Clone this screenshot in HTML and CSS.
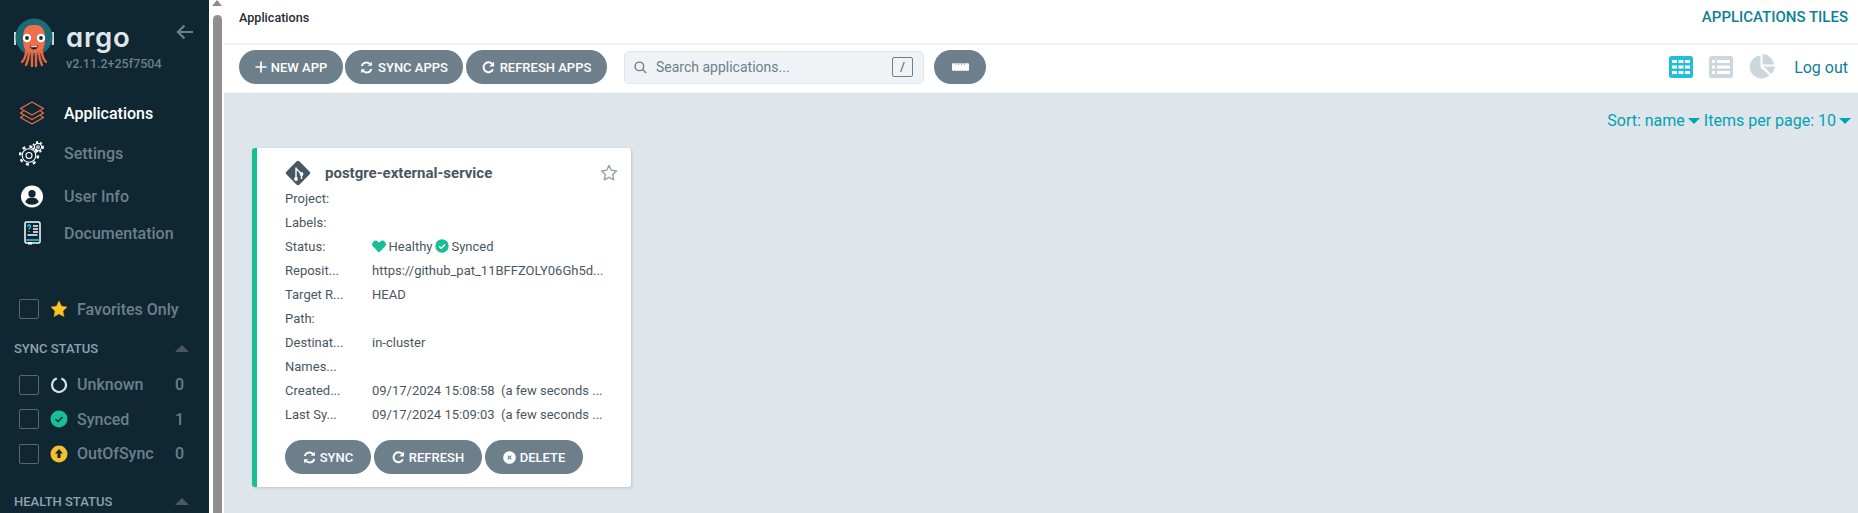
FILE: index.html
```html
<!DOCTYPE html>
<html lang="en">
<head>
<meta charset="utf-8">
<title>Applications Tiles - Argo CD</title>
<link rel="stylesheet" href="styles.css">
</head>
<body>
<aside class="sidebar">
  <div class="brand">
    <svg class="logo" viewBox="0 0 40 50" width="40" height="50">
      <rect x="0" y="14" width="2" height="13" fill="#c9d6dc"/>
      <rect x="38" y="14" width="2" height="13" fill="#c9d6dc"/>
      <circle cx="20" cy="19" r="18.5" fill="#1d6a75"/>
      <path d="M9 22C9 9 13 7 20 7s11 2 11 15c0 6-2 10-4 13H13c-2-3-4-7-4-13z" fill="#ee6f4d"/>
      <path d="M12 33c0 5-2 9-4 11M15 34c0 6-2 11-3 13M18 34v14M22 34v14M25 34c0 6 2 11 3 13M28 33c0 5 2 9 4 11" stroke="#e8663f" stroke-width="2.4" fill="none" stroke-linecap="round"/>
      <circle cx="13" cy="20" r="4.2" fill="#fff"/><circle cx="27" cy="20" r="4.2" fill="#fff"/>
      <circle cx="13" cy="20" r="1.9" fill="#1b2a33"/><circle cx="27" cy="20" r="1.9" fill="#1b2a33"/>
      <path d="M16 27.500c2 1 6 1 8 0-.5 3-2 4-4 4s-3.500-1-4-4z" fill="#2a1712"/>
      <path d="M17 28.200h6v1h-6z" fill="#fff"/>
    </svg>
    <div class="brand-text">
      <div class="wordmark">argo</div>
      <div class="version">v2.11.2+25f7504</div>
    </div>
    <svg class="collapse" viewBox="0 0 18 16" width="18" height="16"><path d="M17 8H2M8.500 1.500 2 8l6.500 6.500" fill="none" stroke="#6d7f8b" stroke-width="2.200"/></svg>
  </div>

  <nav class="nav">
    <a class="nav-item nav-apps active">
      <svg viewBox="0 0 26 26" width="26" height="26" fill="none" stroke="#e96d4c" stroke-width="1.300" stroke-linejoin="round"><path d="M13 2 24.500 8.500 13 15 1.500 8.500z"/><path d="M4.500 11 1.500 13 13 19.500 24.500 13l-3-2"/><path d="M4.500 15.500 1.500 17.500 13 24 24.500 17.500l-3-2"/></svg>
      <span>Applications</span>
    </a>
    <a class="nav-item nav-settings">
      <svg viewBox="0 0 26 26" width="26" height="26" fill="none" stroke="#fff" stroke-width="1.100"><circle cx="10" cy="15.500" r="6.800"/><circle cx="10" cy="15.500" r="9" stroke-dasharray="3 4.070" stroke-width="2.400"/><circle cx="10" cy="15.500" r="3"/><circle cx="19" cy="7" r="3.600"/><circle cx="19" cy="7" r="5" stroke-dasharray="2 2.190" stroke-width="1.800"/><circle cx="19" cy="7" r="1.300"/></svg>
      <span>Settings</span>
    </a>
    <a class="nav-item nav-user">
      <svg viewBox="0 0 24 24" width="23" height="23"><circle cx="12" cy="12" r="11.500" fill="#fff"/><circle cx="12" cy="9" r="3.800" fill="#0f2733"/><path d="M5 18c.5-3.500 3-5 7-5s6.500 1.500 7 5c-2 1.800-4.500 2.600-7 2.600S7 19.800 5 18z" fill="#0f2733"/></svg>
      <span>User Info</span>
    </a>
    <a class="nav-item nav-docs">
      <svg viewBox="0 0 24 24" width="24" height="24" fill="none"><rect x="5" y="1" width="15" height="21" rx="1.500" stroke="#fff" stroke-width="1.500"/><path d="M5 19h15" stroke="#29d3e6" stroke-width="1.500"/><path d="M8 21h4v2.500H8z" fill="#fff"/><path d="M13 5h5M13 8h5M13 11h5M7.500 14h10" stroke="#fff" stroke-width="1.300"/><path d="M7.500 5.500c0-2 3-2 3 0 0 1.300-1.500 1.200-1.500 3M9 10v1" stroke="#29d3e6" stroke-width="1.300"/></svg>
      <span>Documentation</span>
    </a>
  </nav>

  <div class="filter-row favorites">
    <span class="check"></span>
    <svg viewBox="0 0 18 18" width="18" height="18"><path d="M9 .8l2.500 5.300 5.700.8-4.100 4 1 5.800L9 14.100l-5.100 2.600 1-5.800-4.100-4 5.700-.8z" fill="#fdc627" stroke="#e0861a" stroke-width=".4"/></svg>
    <span class="filter-label">Favorites Only</span>
  </div>

  <div class="filter-head sync-head"><span>SYNC STATUS</span><i class="caret-up"></i></div>
  <div class="filter-row">
    <span class="check"></span>
    <svg viewBox="0 0 18 18" width="18" height="18" fill="none"><circle cx="9" cy="9" r="7" stroke="#d6e1e8" stroke-width="2.200" stroke-dasharray="39 5" transform="rotate(-70 9 9)"/></svg>
    <span class="filter-label">Unknown</span><span class="count">0</span>
  </div>
  <div class="filter-row">
    <span class="check"></span>
    <svg viewBox="0 0 18 18" width="18" height="18"><circle cx="9" cy="9" r="8.500" fill="#18be94"/><path d="M5.500 9.200 8 11.500l4.500-4.500" stroke="#0f2733" stroke-width="1.500" fill="none"/></svg>
    <span class="filter-label">Synced</span><span class="count">1</span>
  </div>
  <div class="filter-row">
    <span class="check"></span>
    <svg viewBox="0 0 18 18" width="18" height="18"><circle cx="9" cy="9" r="8.500" fill="#f4c030"/><path d="M9 4 13 8.500H10.500V13h-3V8.500H5z" fill="#0f2733"/></svg>
    <span class="filter-label">OutOfSync</span><span class="count">0</span>
  </div>
  <div class="filter-head health-head"><span>HEALTH STATUS</span><i class="caret-up"></i></div>
</aside>

<div class="scrollbar"><i class="scroll-arrow"></i><i class="scroll-thumb"></i></div>

<main class="main">
  <header class="topbar">
    <span class="crumb">Applications</span>
    <span class="page-title">APPLICATIONS TILES</span>
  </header>

  <div class="toolbar">
    <button class="btn btn-new"><svg viewBox="0 0 12 12" width="12" height="12"><path d="M6 .5v11M.5 6h11" stroke="#fff" stroke-width="1.700"/></svg>NEW APP</button>
    <button class="btn btn-sync"><svg viewBox="0 0 14 14" width="13" height="13" fill="none"><path d="M1.800 5.500A5.300 5.300 0 0 1 11 3.500" stroke="#fff" stroke-width="2.100"/><path d="M12.800 .8v4.400H8.400z" fill="#fff"/><path d="M12.200 8.500A5.300 5.300 0 0 1 3 10.500" stroke="#fff" stroke-width="2.100"/><path d="M1.200 13.200V8.800h4.400z" fill="#fff"/></svg>SYNC APPS</button>
    <button class="btn btn-refresh"><svg viewBox="0 0 14 14" width="13" height="13" fill="none"><path d="M11.800 9A5.300 5.300 0 1 1 10.800 3" stroke="#fff" stroke-width="2.100"/><path d="M13 .6v5.200H7.800z" fill="#fff"/></svg>REFRESH APPS</button>
    <label class="search">
      <svg viewBox="0 0 14 14" width="13" height="13" fill="none" stroke="#6d7f8b" stroke-width="1.500"><circle cx="5.800" cy="5.800" r="4.600"/><path d="M9.200 9.200 13 13"/></svg>
      <span class="search-text">Search applications...</span>
      <kbd class="key">/</kbd>
    </label>
    <button class="btn btn-ruler"><svg viewBox="0 0 18 8" width="17" height="8"><path d="M1 0h16a1 1 0 0 1 1 1v6a1 1 0 0 1-1 1H1a1 1 0 0 1-1-1V1a1 1 0 0 1 1-1z" fill="#fff"/><path d="M4 0v2M7 0v2M10 0v2M13 0v2" stroke="#6d7f8b" stroke-width=".7"/></svg></button>
    <div class="view-switch">
      <svg class="view" viewBox="0 0 24 22" width="24" height="22"><rect width="24" height="22" rx="2.500" fill="#22c0d8"/><path d="M3 4h5v3H3zM9.500 4h5v3h-5zM16 4h5v3h-5zM3 9.500h5v3H3zM9.500 9.500h5v3h-5zM16 9.500h5v3h-5zM3 15h5v3H3zM9.500 15h5v3h-5zM16 15h5v3h-5z" fill="#fff"/></svg>
      <svg class="view" viewBox="0 0 24 22" width="24" height="22"><rect width="24" height="22" rx="2.500" fill="#ccd6dd"/><path d="M3 4h3v3H3zM8 4h13v3H8zM3 9.500h3v3H3zM8 9.500h13v3H8zM3 15h3v3H3zM8 15h13v3H8z" fill="#fff"/></svg>
      <svg class="view view-pie" viewBox="0 0 26 26" width="26" height="26"><path d="M11.500 1.500A11.500 11.500 0 1 0 20.500 21L11.500 13.500z" fill="#ccd6dd"/><path d="M13.500 0A12 12 0 0 1 25 10.500H13.500z" fill="#ccd6dd"/><path d="M14.500 12.500H26A12 12 0 0 1 22.300 20z" fill="#ccd6dd"/></svg>
      <a class="logout">Log out</a>
    </div>
  </div>

  <section class="content">
    <div class="sorter">
      <span>Sort: name</span><i class="caret-down"></i>
      <span>Items per page: 10</span><i class="caret-down"></i>
    </div>

    <article class="card">
      <div class="card-title">
        <svg class="git" viewBox="0 0 26 26" width="26" height="26"><rect x="3.800" y="3.800" width="18.400" height="18.400" rx="2.200" transform="rotate(45 13 13)" fill="#495763"/><path d="M11 7.500v11M11 8.500l5.500 5.500v5" stroke="#fff" stroke-width="1.400" fill="none"/><circle cx="11" cy="19" r="1.900" fill="#fff"/><circle cx="16.500" cy="14" r="1.900" fill="#fff"/></svg>
        <span class="app-name">postgre-external-service</span>
        <svg class="star" viewBox="0 0 18 18" width="18" height="18"><path d="M9 1.500l2.300 4.800 5.200.7-3.800 3.600 1 5.200L9 13.300l-4.700 2.500 1-5.200L1.500 7l5.200-.7z" fill="none" stroke="#8fa4b1" stroke-width="1.400" stroke-linejoin="round"/></svg>
      </div>
      <div class="fields">
        <div class="field"><span class="key-name">Project:</span><span></span></div>
        <div class="field"><span class="key-name">Labels:</span><span></span></div>
        <div class="field"><span class="key-name">Status:</span>
          <span class="status">
            <svg viewBox="0 0 14 13" width="14" height="13"><path d="M7 12.500 1.200 6.700A3.500 3.500 0 0 1 1 2 3.500 3.500 0 0 1 5.800 1.500L7 2.700l1.200-1.200A3.500 3.500 0 0 1 13 2a3.500 3.500 0 0 1-.2 4.700z" fill="#18be94"/></svg>
            <span>Healthy</span>
            <svg viewBox="0 0 14 14" width="14" height="14"><circle cx="7" cy="7" r="6.700" fill="#18be94"/><path d="M4 7.200l2.200 2 3.800-3.800" stroke="#fff" stroke-width="1.400" fill="none"/></svg>
            <span>Synced</span>
          </span>
        </div>
        <div class="field"><span class="key-name">Reposit...</span><span class="value">https://github_pat_11BFFZOLY06Gh5d...</span></div>
        <div class="field"><span class="key-name">Target R...</span><span class="value">HEAD</span></div>
        <div class="field"><span class="key-name">Path:</span><span></span></div>
        <div class="field"><span class="key-name">Destinat...</span><span class="value">in-cluster</span></div>
        <div class="field"><span class="key-name">Names...</span><span></span></div>
        <div class="field"><span class="key-name">Created...</span><span class="value">09/17/2024 15:08:58&nbsp; (a few seconds ...</span></div>
        <div class="field"><span class="key-name">Last Sy...</span><span class="value">09/17/2024 15:09:03&nbsp; (a few seconds ...</span></div>
      </div>
      <div class="card-actions">
        <button class="btn btn-card-sync"><svg viewBox="0 0 14 14" width="13" height="13" fill="none"><path d="M1.800 5.500A5.300 5.300 0 0 1 11 3.500" stroke="#fff" stroke-width="2.100"/><path d="M12.800 .8v4.400H8.400z" fill="#fff"/><path d="M12.200 8.500A5.300 5.300 0 0 1 3 10.500" stroke="#fff" stroke-width="2.100"/><path d="M1.200 13.200V8.800h4.400z" fill="#fff"/></svg>SYNC</button>
        <button class="btn btn-card-refresh"><svg viewBox="0 0 14 14" width="13" height="13" fill="none"><path d="M11.800 9A5.300 5.300 0 1 1 10.800 3" stroke="#fff" stroke-width="2.100"/><path d="M13 .6v5.200H7.800z" fill="#fff"/></svg>REFRESH</button>
        <button class="btn btn-card-delete"><svg viewBox="0 0 14 14" width="13" height="13"><circle cx="7" cy="7" r="6.800" fill="#fff"/><path d="M5 5l4 4M9 5 5 9" stroke="#6d7f8b" stroke-width="1.200"/></svg>DELETE</button>
      </div>
    </article>
  </section>
</main>
</body>
</html>
```

FILE: styles.css
```css
* { box-sizing: border-box; }
html, body { margin: 0; height: 513px; overflow: hidden; }
body { display: flex; font-family: Roboto, "Liberation Sans", sans-serif; background: #fff; color: #495763; }

.sidebar { flex: 0 0 209px; height: 513px; background: #0f2733; overflow: hidden; }
.brand { display: flex; height: 82px; padding: 17px 0 0 14px; }
.logo { flex: none; margin-top: 1px; }
.brand-text { margin-left: 12px; width: 110px; }
.wordmark { font-family: Inter, sans-serif; font-feature-settings: "cv11" 1; font-size: 27.500px; line-height: 28px; letter-spacing: .8px; font-weight: 600; color: #dfe5e8; margin-top: 6px; }
.version { font-size: 12.500px; line-height: 15px; font-weight: 500; color: #6d7f8b; margin-top: 5px; white-space: nowrap; }
.collapse { flex: none; margin: 7px 0 0 0; }

.nav { display: flex; flex-direction: column; padding-top: 11px; }
.nav-item { display: flex; align-items: center; height: 40px; padding-left: 19px; font-size: 16px; font-weight: 500; color: #6d7f8b; }
.nav-item svg { flex: none; width: 26px; }
.nav-item span { margin-left: 19px; }
.nav-apps { height: 40px; }
.nav-settings { height: 40px; }
.nav-user { height: 46px; }
.nav-docs { height: 28px; }
.active { color: #fff; }

.favorites { margin-top: 45px; }
.filter-row { display: flex; align-items: center; height: 34.500px; padding-left: 19px; font-size: 16px; color: #6d7f8b; font-weight: 500; }
.check { flex: none; width: 20px; height: 20px; border: 1.500px solid #566874; border-radius: 2px; margin-right: 11px; }
.filter-row svg { flex: none; }
.filter-label { margin-left: 9px; flex: 1; }
.count { width: 34px; }
.filter-head { display: flex; justify-content: space-between; align-items: center; padding: 0 20px 0 14px; height: 20px; font-size: 13px; font-weight: 500; color: #8ea3b0; }
.sync-head { margin: 12px 0 9px; }
.health-head { margin-top: 20px; }
.caret-up { width: 0; height: 0; border-left: 7px solid transparent; border-right: 7px solid transparent; border-bottom: 7px solid #495763; }

.scrollbar { flex: 0 0 14px; height: 513px; padding: 0 2px 0 3px; display: flex; flex-direction: column; align-items: center; }
.scroll-arrow { width: 0; height: 0; border-left: 5px solid transparent; border-right: 5px solid transparent; border-bottom: 6px solid #8b8b8b; margin-bottom: 9px; }
.scroll-thumb { flex: 1; width: 9px; background: #8f8f8f; border-radius: 5px 5px 0 0; }

.main { flex: 1; min-width: 0; display: flex; flex-direction: column; height: 513px; }
.topbar { flex: none; display: flex; justify-content: space-between; align-items: center; height: 45px; padding: 0 10px 9px 15px; border-bottom: 2px solid #eff3f5; }
.crumb { font-size: 12.600px; font-weight: 500; color: #1f2d38; }
.page-title { font-size: 15px; font-weight: 500; color: #0d7f9a; }

.toolbar { flex: none; display: flex; align-items: center; height: 48px; padding: 0 10px 3px 15px; border-bottom: 1px solid #eff3f5; }
.btn { display: inline-flex; align-items: center; justify-content: center; gap: 4px; height: 34px; border: 0; border-radius: 17px; background: #6d7f8b; color: #fff; font: 500 13px Roboto, sans-serif; padding: 0; white-space: nowrap; }
.btn-new { width: 104px; margin-right: 2px; gap: 4px; }
.btn-sync { width: 118px; margin-right: 3px; gap: 5px; }
.btn-refresh { width: 141px; gap: 5px; }
.search { display: flex; align-items: center; width: 300px; height: 33px; margin-left: 17px; padding: 0 10px 0 9px; border: 1px solid #e0e6ea; border-radius: 5px; background: #eff3f5; color: #6d7f8b; font-size: 14px; }
.search-text { flex: 1; margin-left: 9px; font-weight: 400; }
.key { width: 21px; height: 20px; border: 1px solid #6d7f8b; border-radius: 2px; font: 400 12px Roboto, sans-serif; display: flex; align-items: center; justify-content: center; color: #3f4f5a; }
.btn-ruler { width: 52px; margin-left: 10px; }
.view-switch { margin-left: auto; display: flex; align-items: center; gap: 16px; }
.logout { font-size: 16px; color: #0d7f9a; margin-left: 3px; }

.content { flex: 1; background: #dee6eb; min-height: 0; }
.sorter { display: flex; justify-content: flex-end; align-items: center; gap: 3px; height: 55px; padding: 0 6px 0 0; font-size: 16px; color: #00a2b3; }
.caret-down { width: 0; height: 0; border-left: 6px solid transparent; border-right: 6px solid transparent; border-top: 6px solid #00a2b3; margin-right: 1px; }

.card { width: 379px; height: 339px; margin-left: 28px; background: #fff; border-left: 5px solid #18be94; border-radius: 3px; box-shadow: 1px 1px 3px rgba(0,0,0,.14); padding: 12px 13px 0 28px; }
.card-title { display: flex; align-items: center; height: 25px; }
.git { flex: none; }
.app-name { margin-left: 14px; flex: 1; font-size: 15px; font-weight: 700; color: #495763; }
.star { flex: none; }
.fields { margin-top: 1px; }
.field { display: flex; align-items: center; height: 24px; font-size: 13px; color: #495763; white-space: nowrap; }
.key-name { flex: 0 0 87px; }
.status { display: flex; align-items: center; gap: 2.500px; }
.card-actions { display: flex; margin-top: 14px; gap: 3px; }
.btn-card-sync { width: 86px; }
.btn-card-refresh { width: 108px; }
.btn-card-delete { width: 98px; }
```
